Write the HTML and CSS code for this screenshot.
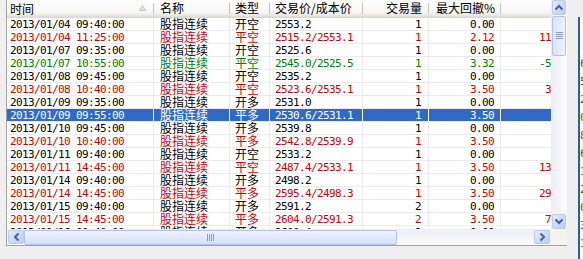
FILE: index.html
```html
<!DOCTYPE html>
<html>

<head>
  <title>交易记录</title>
  <meta charset="utf-8" />
  <link rel="stylesheet" href="styles.css">
</head>

<body>
  <div class="screen">
    <div class="gutter"></div>

    <div class="list">
      <div class="viewport">
        <div class="head">
          <span class="hcell first">时间
            <svg class="sort" width="7" height="6" viewBox="0 0 7 6"><path d="M3.5 0.5 L6.5 5.5 L0.5 5.5 Z" fill="#e4e2da" stroke="#c9c7bc" stroke-width="1"/></svg>
          </span>
          <span class="hcell name">名称</span>
          <span class="hcell">类型</span>
          <span class="hcell">交易价/成本价</span>
          <span class="hcell r qty">交易量</span>
          <span class="hcell r">最大回撤%</span>
          <span class="hcell r"></span>
        </div>

        <div class="row">
          <span class="cell t first">2013/01/04 09:40:00</span><span class="cell n name">股指连续</span><span class="cell n">开空</span><span class="cell t">2553.2</span><span class="cell t r qty">1</span><span class="cell t r">0.00</span><span class="cell t r pnl"></span>
        </div>
        <div class="row up">
          <span class="cell t first">2013/01/04 11:25:00</span><span class="cell n name">股指连续</span><span class="cell n">平空</span><span class="cell t">2515.2/2553.1</span><span class="cell t r qty">1</span><span class="cell t r">2.12</span><span class="cell t r pnl">11370.00</span>
        </div>
        <div class="row">
          <span class="cell t first">2013/01/07 09:35:00</span><span class="cell n name">股指连续</span><span class="cell n">开空</span><span class="cell t">2525.6</span><span class="cell t r qty">1</span><span class="cell t r">0.00</span><span class="cell t r pnl"></span>
        </div>
        <div class="row down">
          <span class="cell t first">2013/01/07 10:55:00</span><span class="cell n name">股指连续</span><span class="cell n">平空</span><span class="cell t">2545.0/2525.5</span><span class="cell t r qty">1</span><span class="cell t r">3.32</span><span class="cell t r pnl">-5850.00</span>
        </div>
        <div class="row">
          <span class="cell t first">2013/01/08 09:45:00</span><span class="cell n name">股指连续</span><span class="cell n">开空</span><span class="cell t">2535.2</span><span class="cell t r qty">1</span><span class="cell t r">0.00</span><span class="cell t r pnl"></span>
        </div>
        <div class="row up">
          <span class="cell t first">2013/01/08 10:40:00</span><span class="cell n name">股指连续</span><span class="cell n">平空</span><span class="cell t">2523.6/2535.1</span><span class="cell t r qty">1</span><span class="cell t r">3.50</span><span class="cell t r pnl">3450.00</span>
        </div>
        <div class="row">
          <span class="cell t first">2013/01/09 09:35:00</span><span class="cell n name">股指连续</span><span class="cell n">开多</span><span class="cell t">2531.0</span><span class="cell t r qty">1</span><span class="cell t r">0.00</span><span class="cell t r pnl"></span>
        </div>
        <div class="row sel">
          <span class="cell t first">2013/01/09 09:55:00</span><span class="cell n name">股指连续</span><span class="cell n">平多</span><span class="cell t">2530.6/2531.1</span><span class="cell t r qty">1</span><span class="cell t r">3.50</span><span class="cell t r pnl"></span>
        </div>
        <div class="row">
          <span class="cell t first">2013/01/10 09:45:00</span><span class="cell n name">股指连续</span><span class="cell n">开多</span><span class="cell t">2539.8</span><span class="cell t r qty">1</span><span class="cell t r">0.00</span><span class="cell t r pnl"></span>
        </div>
        <div class="row up">
          <span class="cell t first">2013/01/10 10:40:00</span><span class="cell n name">股指连续</span><span class="cell n">平多</span><span class="cell t">2542.8/2539.9</span><span class="cell t r qty">1</span><span class="cell t r">3.50</span><span class="cell t r pnl">870.00</span>
        </div>
        <div class="row">
          <span class="cell t first">2013/01/11 09:40:00</span><span class="cell n name">股指连续</span><span class="cell n">开空</span><span class="cell t">2533.2</span><span class="cell t r qty">1</span><span class="cell t r">0.00</span><span class="cell t r pnl"></span>
        </div>
        <div class="row up">
          <span class="cell t first">2013/01/11 14:45:00</span><span class="cell n name">股指连续</span><span class="cell n">平空</span><span class="cell t">2487.4/2533.1</span><span class="cell t r qty">1</span><span class="cell t r">3.50</span><span class="cell t r pnl">13710.00</span>
        </div>
        <div class="row">
          <span class="cell t first">2013/01/14 09:40:00</span><span class="cell n name">股指连续</span><span class="cell n">开多</span><span class="cell t">2498.2</span><span class="cell t r qty">1</span><span class="cell t r">0.00</span><span class="cell t r pnl"></span>
        </div>
        <div class="row up">
          <span class="cell t first">2013/01/14 14:45:00</span><span class="cell n name">股指连续</span><span class="cell n">平多</span><span class="cell t">2595.4/2498.3</span><span class="cell t r qty">1</span><span class="cell t r">3.50</span><span class="cell t r pnl">29130.00</span>
        </div>
        <div class="row">
          <span class="cell t first">2013/01/15 09:40:00</span><span class="cell n name">股指连续</span><span class="cell n">开多</span><span class="cell t">2591.2</span><span class="cell t r qty">2</span><span class="cell t r">0.00</span><span class="cell t r pnl"></span>
        </div>
        <div class="row up">
          <span class="cell t first">2013/01/15 14:45:00</span><span class="cell n name">股指连续</span><span class="cell n">平多</span><span class="cell t">2604.0/2591.3</span><span class="cell t r qty">2</span><span class="cell t r">3.50</span><span class="cell t r pnl">7620.00</span>
        </div>
        <div class="row">
          <span class="cell t first">2013/01/16 09:40:00</span><span class="cell n name">股指连续</span><span class="cell n">开多</span><span class="cell t">2600.4</span><span class="cell t r qty">2</span><span class="cell t r">0.00</span><span class="cell t r pnl"></span>
        </div>
      </div>

      <div class="vscroll">
        <div class="sbtn">
          <svg width="10" height="7" viewBox="0 0 10 7"><path d="M1.5 5.5 L5 2 L8.5 5.5" fill="none" stroke="#4d6185" stroke-width="2"/></svg>
        </div>
        <div class="vthumb">
          <svg width="7" height="8" viewBox="0 0 7 8"><path d="M0 0.5 H7 M0 2.5 H7 M0 4.5 H7 M0 6.5 H7" stroke="#8a9cc9" stroke-width="1"/></svg>
        </div>
        <div class="track"></div>
        <div class="sbtn">
          <svg width="10" height="7" viewBox="0 0 10 7"><path d="M1.5 1.5 L5 5 L8.5 1.5" fill="none" stroke="#4d6185" stroke-width="2"/></svg>
        </div>
      </div>

      <div class="hscroll">
        <div class="sbtn">
          <svg width="7" height="10" viewBox="0 0 7 10"><path d="M5.5 1.5 L2 5 L5.5 8.5" fill="none" stroke="#4d6185" stroke-width="2"/></svg>
        </div>
        <div class="hthumb">
          <svg width="8" height="7" viewBox="0 0 8 7"><path d="M0.5 0 V7 M2.5 0 V7 M4.5 0 V7 M6.5 0 V7" stroke="#8a9cc9" stroke-width="1"/></svg>
        </div>
        <div class="track"></div>
        <div class="sbtn">
          <svg width="7" height="10" viewBox="0 0 7 10"><path d="M1.5 1.5 L5 5 L1.5 8.5" fill="none" stroke="#4d6185" stroke-width="2"/></svg>
        </div>
      </div>

      <div class="corner"></div>
    </div>

    <div class="side">
      <div class="pane">6<br>5<br>2<br>0<br>8<br>6<br>1<br>2<br>0<br>3<br>1</div>
    </div>
  </div>
</body>

</html>
```

FILE: styles.css
```css
body {
  margin: 0;
  background: #efefef;
  font-family: "Noto Sans CJK SC", sans-serif;
  overflow: hidden;
}

.screen {
  display: flex;
  width: 583px;
  height: 259px;
}

.gutter {
  width: 6px;
  flex: none;
}

/* list view */
.list {
  flex: none;
  align-self: flex-start;
  display: grid;
  grid-template-columns: 544px 16px;
  grid-template-rows: 229px 16px;
  border-left: 1px solid #a3a3a3;
  border-bottom: 1px solid #a3a3a3;
  background: #fff;
}

.viewport {
  overflow: hidden;
}

.head,
.row {
  display: grid;
  grid-template-columns: 147px 76px 40px 93px 66px 72px 93px;
}

.head {
  height: 18px;
  background: linear-gradient(#fdfdfd, #f7f7f5 12px, #ebeae4 15px, #d6d4cb 18px);
}

.hcell {
  font-size: 12px;
  line-height: 16px;
  padding: 0 5px;
  white-space: nowrap;
  background: linear-gradient(#c9c7bc, #c9c7bc) no-repeat right 0 top 3px / 1px 11px;
}

.hcell.first {
  display: flex;
  justify-content: space-between;
  align-items: center;
  padding: 0 8px 0 3px;
}

.sort {
  margin-top: -3px;
}

.row {
  height: 13px;
  box-sizing: border-box;
  border-bottom: 1px solid #ebebeb;
}

.cell {
  height: 12px;
  box-sizing: border-box;
  padding: 0 5px;
  border-right: 1px solid #ebebeb;
  white-space: nowrap;
}

.t {
  font-family: "DejaVu Sans Mono", monospace;
  font-size: 11px;
  letter-spacing: -0.62px;
  line-height: 12px;
  padding-top: 1px;
}

.n {
  font-size: 12px;
  line-height: 12px;
}

.first {
  padding-left: 3px;
}

.name {
  padding-left: 6px;
}

.r {
  text-align: right;
  padding-right: 6px;
}

.qty {
  padding-right: 7px;
}

.up {
  color: #cc0000;
}

.down {
  color: #008000;
}

.row.sel {
  background: #316ac5;
  color: #fff;
}

.row.sel .cell {
  border-right-color: #fff;
}

/* scrollbars */
.vscroll {
  display: flex;
  flex-direction: column;
  padding: 0 1px;
  background: linear-gradient(to right, #eceef4, #fcfcfe);
}

.hscroll {
  display: flex;
  padding: 1px 1px 0 1px;
  background: linear-gradient(#eceef4, #fcfcfe);
}

.sbtn {
  flex: none;
  width: 14px;
  height: 15px;
  box-sizing: border-box;
  display: flex;
  align-items: center;
  justify-content: center;
  border: 1px solid #bccbf1;
  border-radius: 2px;
  background: linear-gradient(135deg, #e4ecfe, #b9cbf5);
}

.hscroll .sbtn {
  width: 16px;
  height: 14px;
}

.vthumb {
  flex: none;
  height: 38px;
  margin-top: 1px;
  display: flex;
  align-items: center;
  justify-content: center;
  border: 1px solid #b2c3ee;
  border-radius: 2px;
  background: linear-gradient(to right, #d9e3fd, #eef3fe);
}

.hthumb {
  flex: none;
  width: 373px;
  display: flex;
  align-items: center;
  justify-content: center;
  box-sizing: border-box;
  border: 1px solid #b2c3ee;
  border-radius: 2px;
  background: linear-gradient(#eef3fe, #d4e0fc);
}

.track {
  flex: 1;
}

.corner {
  background: #f3f3ef;
}

/* window behind */
.side {
  flex: 1;
  display: flex;
  padding-left: 11px;
}

.pane {
  flex: 1;
  margin-top: 17px;
  padding-top: 38px;
  border-left: 2px solid #2f5ba6;
  background: #fff;
  color: #008000;
  font-family: "DejaVu Sans Mono", monospace;
  font-size: 11px;
  line-height: 18px;
  overflow: hidden;
  white-space: nowrap;
}
```
